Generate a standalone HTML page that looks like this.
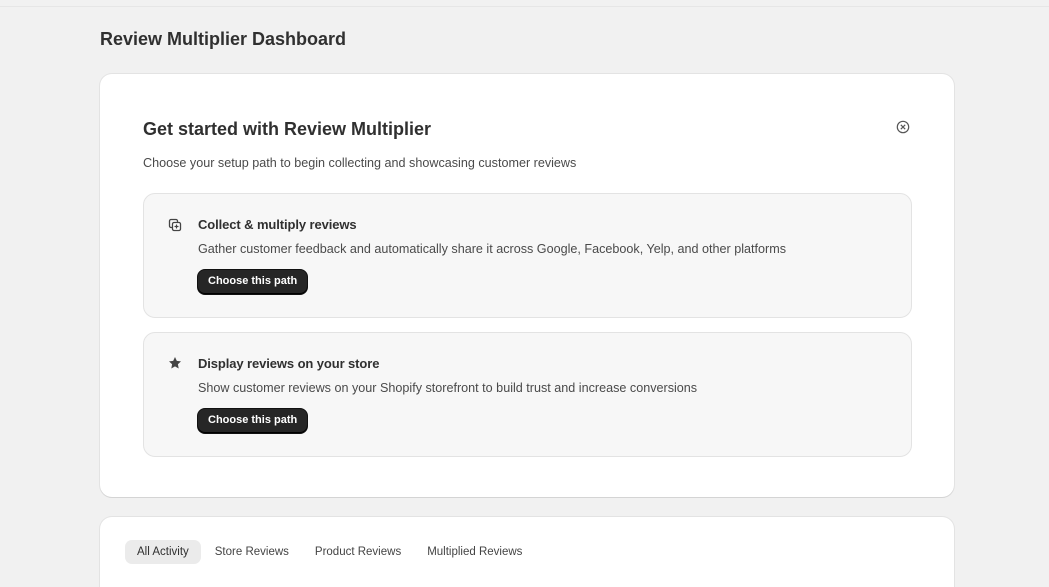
<!DOCTYPE html>
<html><head><style>
html,body{margin:0;height:587px;overflow:hidden}
body{background:#f1f1f1;font-family:"Liberation Sans",sans-serif;color:#303030;width:1049px;position:relative}
.top{position:absolute;top:0;left:0;right:0;height:6px;border-bottom:1px solid #e6e6e6;background:#f1f1f1}
h1{position:absolute;left:100px;top:29px;margin:0;font-size:18px;font-weight:bold;color:#303030}
.card{position:absolute;left:100px;width:854px;background:#fff;border-radius:12px;box-shadow:0 1px 0 #d4d4d4,0 0 0 1px #e3e3e3}
.c1{top:74px;height:423px}
.c2{top:517px;height:70px;border-radius:12px 12px 0 0}
.h2{position:absolute;left:43px;top:45px;font-size:18px;font-weight:bold;color:#303030}
.sub{position:absolute;left:43px;top:82px;font-size:12.6px;color:#4a4a4a}
.x{position:absolute;left:796px;top:46px}
.opt{position:absolute;left:43px;width:767px;height:123px;background:#f7f7f7;border:1px solid #e3e3e3;border-radius:12px}
.opt .t{position:absolute;left:54px;top:23px;font-size:13px;font-weight:bold;letter-spacing:-0.1px}
.opt .d{position:absolute;left:54px;top:48px;font-size:12.6px;color:#4a4a4a}
.opt .b{position:absolute;left:54px;top:76px;height:24px;padding:0 10px;line-height:23px;background:#262626;color:#fff;font-size:11px;font-weight:bold;border-radius:7px;box-shadow:inset 0 -1px 0 #000,0 0 0 1px #111}
.opt svg{position:absolute;left:24px;top:24px}
.tabs{position:absolute;left:25px;top:23px;display:flex;font-size:11.5px}
.tabs span{padding:0 12px;height:24px;line-height:24px;margin-right:2px;color:#444;border-radius:7px}
.tabs .a{background:#ebebeb;color:#303030}
</style></head><body>
<div class="top"></div>
<h1>Review Multiplier Dashboard</h1>
<div class="card c1">
<div class="h2">Get started with Review Multiplier</div>
<svg class="x" width="14" height="14" viewBox="0 0 14 14"><circle cx="7" cy="7" r="5.7" fill="none" stroke="#555" stroke-width="1.2"/><path d="M4.8 4.8l4.4 4.4M9.2 4.8l-4.4 4.4" stroke="#555" stroke-width="1.2"/></svg>
<div class="sub">Choose your setup path to begin collecting and showcasing customer reviews</div>
<div class="opt" style="top:119px">
<svg width="14" height="14" viewBox="0 0 14 14"><rect x="1.5" y="1.5" width="8" height="8" rx="1.5" fill="none" stroke="#444" stroke-width="1.3"/><rect x="4.5" y="4.5" width="8" height="8" rx="1.5" fill="#fff" stroke="#444" stroke-width="1.3"/><path d="M8.5 6.5v4M6.5 8.5h4" stroke="#444" stroke-width="1.2"/></svg>
<div class="t">Collect &amp; multiply reviews</div>
<div class="d">Gather customer feedback and automatically share it across Google, Facebook, Yelp, and other platforms</div>
<div class="b">Choose this path</div></div>
<div class="opt" style="top:258px">
<svg width="14" height="14" viewBox="0 0 14 14" style="top:23px"><path d="M7 1l1.8 3.9 4.2.5-3.1 2.9.8 4.2L7 10.4 3.3 12.5l.8-4.2L1 5.4l4.2-.5z" fill="#444"/></svg>
<div class="t">Display reviews on your store</div>
<div class="d">Show customer reviews on your Shopify storefront to build trust and increase conversions</div>
<div class="b">Choose this path</div></div>
</div>
<div class="card c2"><div class="tabs"><span class="a">All Activity</span><span>Store Reviews</span><span>Product Reviews</span><span>Multiplied Reviews</span></div></div>
</body></html>
